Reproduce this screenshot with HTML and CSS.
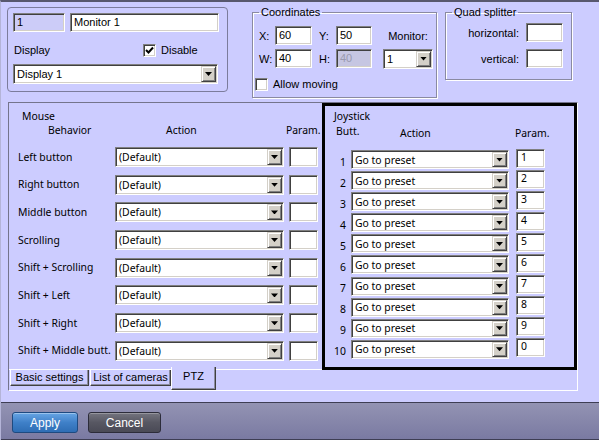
FILE: index.html
```html
<!DOCTYPE html>
<html>
<head>
<meta charset="utf-8">
<link rel="stylesheet" href="styles.css">
</head>
<body>
<div class="window">
  <div class="top">
    <div class="monbox">
      <div class="row1">
        <div class="inp dis w52">1</div>
        <div class="inp w149">Monitor 1</div>
      </div>
      <div class="row2">
        <span class="dlabel">Display</span>
        <div class="chk"><span class="box"><svg width="9" height="9" viewBox="0 0 9 9"><path d="M1 4 L3.5 6.5 L8 1.5" fill="none" stroke="#000" stroke-width="2"/></svg></span><span>Disable</span></div>
      </div>
      <div class="sel seld"><span class="val">Display 1</span><span class="btn"><i></i></span></div>
    </div>

    <fieldset class="grp coords">
      <legend>Coordinates</legend>
      <div class="cgrid">
        <span class="lbl">X:</span>
        <div class="inp">60</div>
        <span class="lbl">Y:</span>
        <div class="inp">50</div>
        <span class="mlbl">Monitor:</span>
        <span class="lbl">W:</span>
        <div class="inp">40</div>
        <span class="lbl">H:</span>
        <div class="inp dis gray">40</div>
        <div class="sel selm"><span class="val">1</span><span class="btn"><i></i></span></div>
      </div>
      <div class="chk amove"><span class="box"></span><span>Allow moving</span></div>
    </fieldset>

    <fieldset class="grp quad">
      <legend>Quad splitter</legend>
      <div class="qgrid">
        <span class="qlbl">horizontal:</span>
        <div class="inp"></div>
        <span class="qlbl">vertical:</span>
        <div class="inp"></div>
      </div>
    </fieldset>
  </div>

  <div class="tabpanel">
    <div class="page">
      <div class="mouse">
        <div class="mtitle">Mouse</div>
        <div class="mgrid mhead">
          <span class="h-beh">Behavior</span>
          <span class="h-act">Action</span>
          <span class="h-par">Param.</span>
        </div>
        <div class="mgrid mrows">
          <span class="mlab">Left button</span>
          <div class="sel msel"><span class="val">(Default)</span><span class="btn"><i></i></span></div>
          <div class="inp mpar"></div>

          <span class="mlab">Right button</span>
          <div class="sel msel"><span class="val">(Default)</span><span class="btn"><i></i></span></div>
          <div class="inp mpar"></div>

          <span class="mlab">Middle button</span>
          <div class="sel msel"><span class="val">(Default)</span><span class="btn"><i></i></span></div>
          <div class="inp mpar"></div>

          <span class="mlab">Scrolling</span>
          <div class="sel msel"><span class="val">(Default)</span><span class="btn"><i></i></span></div>
          <div class="inp mpar"></div>

          <span class="mlab">Shift + Scrolling</span>
          <div class="sel msel"><span class="val">(Default)</span><span class="btn"><i></i></span></div>
          <div class="inp mpar"></div>

          <span class="mlab">Shift + Left</span>
          <div class="sel msel"><span class="val">(Default)</span><span class="btn"><i></i></span></div>
          <div class="inp mpar"></div>

          <span class="mlab">Shift + Right</span>
          <div class="sel msel"><span class="val">(Default)</span><span class="btn"><i></i></span></div>
          <div class="inp mpar"></div>

          <span class="mlab">Shift + Middle butt.</span>
          <div class="sel msel"><span class="val">(Default)</span><span class="btn"><i></i></span></div>
          <div class="inp mpar"></div>
        </div>
      </div>

      <div class="joy">
        <div class="jtitle">Joystick</div>
        <div class="jhead">
          <span class="h-butt">Butt.</span>
          <span class="h-jact">Action</span>
          <span class="h-jpar">Param.</span>
        </div>
        <div class="jgrid">
          <span class="jnum">1</span><div class="sel jsel"><span class="val">Go to preset</span><span class="btn"><i></i></span></div><div class="inp jpar">1</div>
          <span class="jnum">2</span><div class="sel jsel"><span class="val">Go to preset</span><span class="btn"><i></i></span></div><div class="inp jpar">2</div>
          <span class="jnum">3</span><div class="sel jsel"><span class="val">Go to preset</span><span class="btn"><i></i></span></div><div class="inp jpar">3</div>
          <span class="jnum">4</span><div class="sel jsel"><span class="val">Go to preset</span><span class="btn"><i></i></span></div><div class="inp jpar">4</div>
          <span class="jnum">5</span><div class="sel jsel"><span class="val">Go to preset</span><span class="btn"><i></i></span></div><div class="inp jpar">5</div>
          <span class="jnum">6</span><div class="sel jsel"><span class="val">Go to preset</span><span class="btn"><i></i></span></div><div class="inp jpar">6</div>
          <span class="jnum">7</span><div class="sel jsel"><span class="val">Go to preset</span><span class="btn"><i></i></span></div><div class="inp jpar">7</div>
          <span class="jnum">8</span><div class="sel jsel"><span class="val">Go to preset</span><span class="btn"><i></i></span></div><div class="inp jpar">8</div>
          <span class="jnum">9</span><div class="sel jsel"><span class="val">Go to preset</span><span class="btn"><i></i></span></div><div class="inp jpar">9</div>
          <span class="jnum">10</span><div class="sel jsel"><span class="val">Go to preset</span><span class="btn"><i></i></span></div><div class="inp jpar">0</div>
        </div>
      </div>
    </div>
    <div class="tabstrip">
      <div class="tab t1">Basic settings</div>
      <div class="tab t2">List of cameras</div>
      <div class="tab active">PTZ</div>
    </div>
  </div>

  <div class="footer">
    <div class="fbtn apply">Apply</div>
    <div class="fbtn cancel">Cancel</div>
  </div>
</div>
</body>
</html>
```

FILE: styles.css
```css
html, body {
  margin: 0;
  padding: 0;
}
body {
  width: 599px;
  height: 440px;
  overflow: hidden;
  background: #ccccff;
  font-family: "Liberation Sans", Arial, sans-serif;
  font-size: 11px;
  color: #000;
}
.window {
  height: 440px;
  box-sizing: border-box;
  border-top: 2px solid #58586e;
  border-left: 1px solid #b4b4d8;
  display: flex;
  flex-direction: column;
}

/* generic controls */
.inp {
  box-sizing: border-box;
  height: 19px;
  background: #fff;
  border: 1px solid;
  border-color: #808080 #ffffff #ffffff #808080;
  box-shadow: inset 1px 1px 0 #404040, inset -1px -1px 0 #d4d0c8;
  padding: 0 3px;
  line-height: 16px;
  white-space: nowrap;
  overflow: hidden;
}
.inp.dis {
  background: #ccccf8;
}
.inp.gray {
  background: #c6c6e2;
  color: #9a9ab0;
}
.sel {
  box-sizing: border-box;
  height: 20px;
  display: flex;
  align-items: center;
  background: #fff;
  border: 1px solid;
  border-color: #808080 #ffffff #ffffff #808080;
  box-shadow: inset 1px 1px 0 #404040, inset -1px -1px 0 #d4d0c8;
  padding: 1px;
}
.sel .val {
  flex: 1;
  padding-left: 2px;
  white-space: nowrap;
  overflow: hidden;
}
.sel .btn {
  width: 15px;
  height: 16px;
  box-sizing: border-box;
  background: #d4d0c8;
  border: 1px solid;
  border-color: #d4d0c8 #404040 #404040 #d4d0c8;
  box-shadow: inset 1px 1px 0 #ffffff, inset -1px -1px 0 #808080;
  display: flex;
  align-items: center;
  justify-content: center;
}
.sel .btn i {
  display: block;
  width: 7px;
  height: 4px;
  background: #000;
  clip-path: polygon(0 0, 100% 0, 50% 100%);
}
.chk {
  display: flex;
  align-items: center;
  gap: 5px;
}
.chk .box {
  width: 13px;
  height: 13px;
  box-sizing: border-box;
  background: #fff;
  border: 1px solid;
  border-color: #808080 #ffffff #ffffff #808080;
  box-shadow: inset 1px 1px 0 #404040, inset -1px -1px 0 #d4d0c8;
  display: flex;
  align-items: center;
  justify-content: center;
}

/* top area */
.top {
  height: 100px;
  flex-shrink: 0;
  display: flex;
  align-items: flex-start;
}
.monbox {
  margin: 5px 0 0 6px;
  width: 221px;
  height: 85px;
  box-sizing: border-box;
  border: 1px solid #7c7c9c;
  border-radius: 4px;
  padding: 5px 0 0 5px;
}
.row1 {
  display: flex;
  gap: 5px;
}
.w52 { width: 52px; }
.w149 { width: 149px; }
.row2 {
  margin-top: 8px;
  height: 20px;
  display: flex;
  align-items: center;
}
.dlabel {
  width: 130px;
  padding-left: 1px;
  box-sizing: border-box;
}
.seld {
  margin-top: 4px;
  width: 205px;
}

.grp {
  margin: 4px 0 0 0;
  border: 1px solid #8a8aa2;
  box-shadow: 1px 1px 0 #ffffff, inset 1px 1px 0 #ffffff;
  box-sizing: border-box;
  min-width: 0;
}
.grp legend {
  padding: 0 2px;
  line-height: 12px;
  font-size: 11px;
}
.coords {
  margin-left: 24px;
  width: 185px;
  padding: 8px 0 6px 6px;
}
.cgrid {
  display: grid;
  grid-template-columns: 16px 37px 24px 36px 61px;
  grid-template-rows: 19px 19px;
  row-gap: 4px;
  align-items: center;
}
.cgrid > .inp:nth-child(4),
.cgrid > .inp:nth-child(9) {
  width: 36px;
}
.cgrid > span.lbl:nth-child(3),
.cgrid > span.lbl:nth-child(8) {
  padding-left: 7px;
}
.mlbl {
  padding-left: 11px;
  text-align: center;
  width: 61px;
  box-sizing: border-box;
}
.selm {
  margin-left: 11px;
  width: 50px;
  height: 20px;
}
.amove {
  margin: 9px 0 0 -4px;
  height: 14px;
  gap: 5px;
}

.quad {
  margin-left: 8px;
  width: 127px;
  padding: 5px 8px 11px 0;
}
.quad legend {
  margin-left: 6px;
}
.qgrid {
  display: grid;
  grid-template-columns: 1fr 37px;
  grid-template-rows: 19px 19px;
  column-gap: 7px;
  row-gap: 7px;
  align-items: center;
}
.qlbl {
  text-align: right;
}

/* tab panel */
.tabpanel {
  margin-left: 7px;
  width: 570px;
  height: 289px;
  box-sizing: border-box;
  border-top: 1px solid #74748c;
  border-left: 1px solid #74748c;
  border-right: 1px solid #ffffff;
  border-bottom: 1px solid #ffffff;
  flex-shrink: 0;
  display: flex;
  flex-direction: column;
}
.page {
  height: 267px;
  display: flex;
  font-family: "Noto Sans", "DejaVu Sans", sans-serif;
  font-size: 10.4px;
  border-bottom: 1px solid #ffffff;
  box-sizing: border-box;
}
.mouse {
  width: 313px;
  padding-top: 7px;
  box-sizing: border-box;
}
.mtitle {
  margin-left: 13px;
  line-height: 13px;
}
.mgrid {
  display: grid;
  grid-template-columns: 106px 174px 29px;
}
.mhead {
  margin-top: 1px;
  line-height: 13px;
  white-space: nowrap;
}
.h-beh { padding-left: 39px; }
.h-act { padding-left: 51px; }
.h-par { margin-left: -3px; }
.mrows {
  margin-top: 10px;
  grid-auto-rows: 20px;
  row-gap: 7.7px;
  align-items: center;
}
.mlab {
  padding-left: 9px;
  white-space: nowrap;
  line-height: 13px;
}
.msel {
  width: 169px;
}
.mpar {
  height: 20px;
}

.joy {
  width: 255px;
  height: 267px;
  box-sizing: border-box;
  border: 3px solid #000;
  padding-top: 4px;
}
.jtitle {
  margin-left: 9px;
  line-height: 13px;
}
.jhead {
  margin-top: 4px;
  line-height: 13px;
  display: flex;
  white-space: nowrap;
}
.h-butt { margin-left: 11px; width: 64px; position: relative; top: -2px; }
.h-jact { width: 115px; }
.jgrid {
  margin-top: 10px;
  display: grid;
  grid-template-columns: 26px 165px 29px;
  grid-auto-rows: 19px;
  row-gap: 2.1px;
  align-items: center;
}
.jnum {
  text-align: right;
  padding-right: 5px;
  line-height: 13px;
  padding-top: 5px;
}
.jsel {
  width: 158px;
  height: 19px;
}
.jsel .btn {
  height: 15px;
}
.jpar {
  height: 19px;
  margin-top: -3px;
  padding-left: 4px;
  line-height: 14px;
}

.tabstrip {
  height: 20px;
  display: flex;
  align-items: flex-start;
  padding-left: 1px;
}
.tab {
  box-sizing: border-box;
  height: 16px;
  line-height: 15px;
  text-align: center;
  border-left: 1px solid #ffffff;
  border-right: 1px solid #404040;
  border-bottom: 1px solid #404040;
  box-shadow: inset -1px -1px 0 #8c8ca0;
  white-space: nowrap;
  font-size: 11px;
}
.t1 { width: 79px; }
.t2 { width: 81px; margin-left: 1px; }
.tab.active {
  width: 45px;
  height: 23px;
  margin-top: -3px;
  background: #ccccff;
  line-height: 17px;
  padding-top: 1px;
}

/* footer */
.footer {
  margin-top: 11px;
  flex: 1;
  box-sizing: border-box;
  border-top: 1px solid #3e3e54;
  border-bottom: 1px solid #3e3e54;
  background: linear-gradient(#9393b3, #7a7aa2);
  display: flex;
  align-items: flex-start;
  padding: 9px 0 0 11px;
}
.fbtn {
  height: 21px;
  box-sizing: border-box;
  border-radius: 3px;
  color: #fff;
  font-size: 12px;
  display: flex;
  align-items: center;
  justify-content: center;
}
.apply {
  width: 66px;
  border: 1px solid #1e4a80;
  background: linear-gradient(#67a5e4, #3f80c8 50%, #2e6db4);
  box-shadow: inset 0 1px 0 rgba(255, 255, 255, 0.35);
}
.cancel {
  width: 73px;
  margin-left: 10px;
  border: 1px solid #2c2c3a;
  background: linear-gradient(#74747f, #575762 50%, #4a4a56);
  box-shadow: inset 0 1px 0 rgba(255, 255, 255, 0.25);
}
```
